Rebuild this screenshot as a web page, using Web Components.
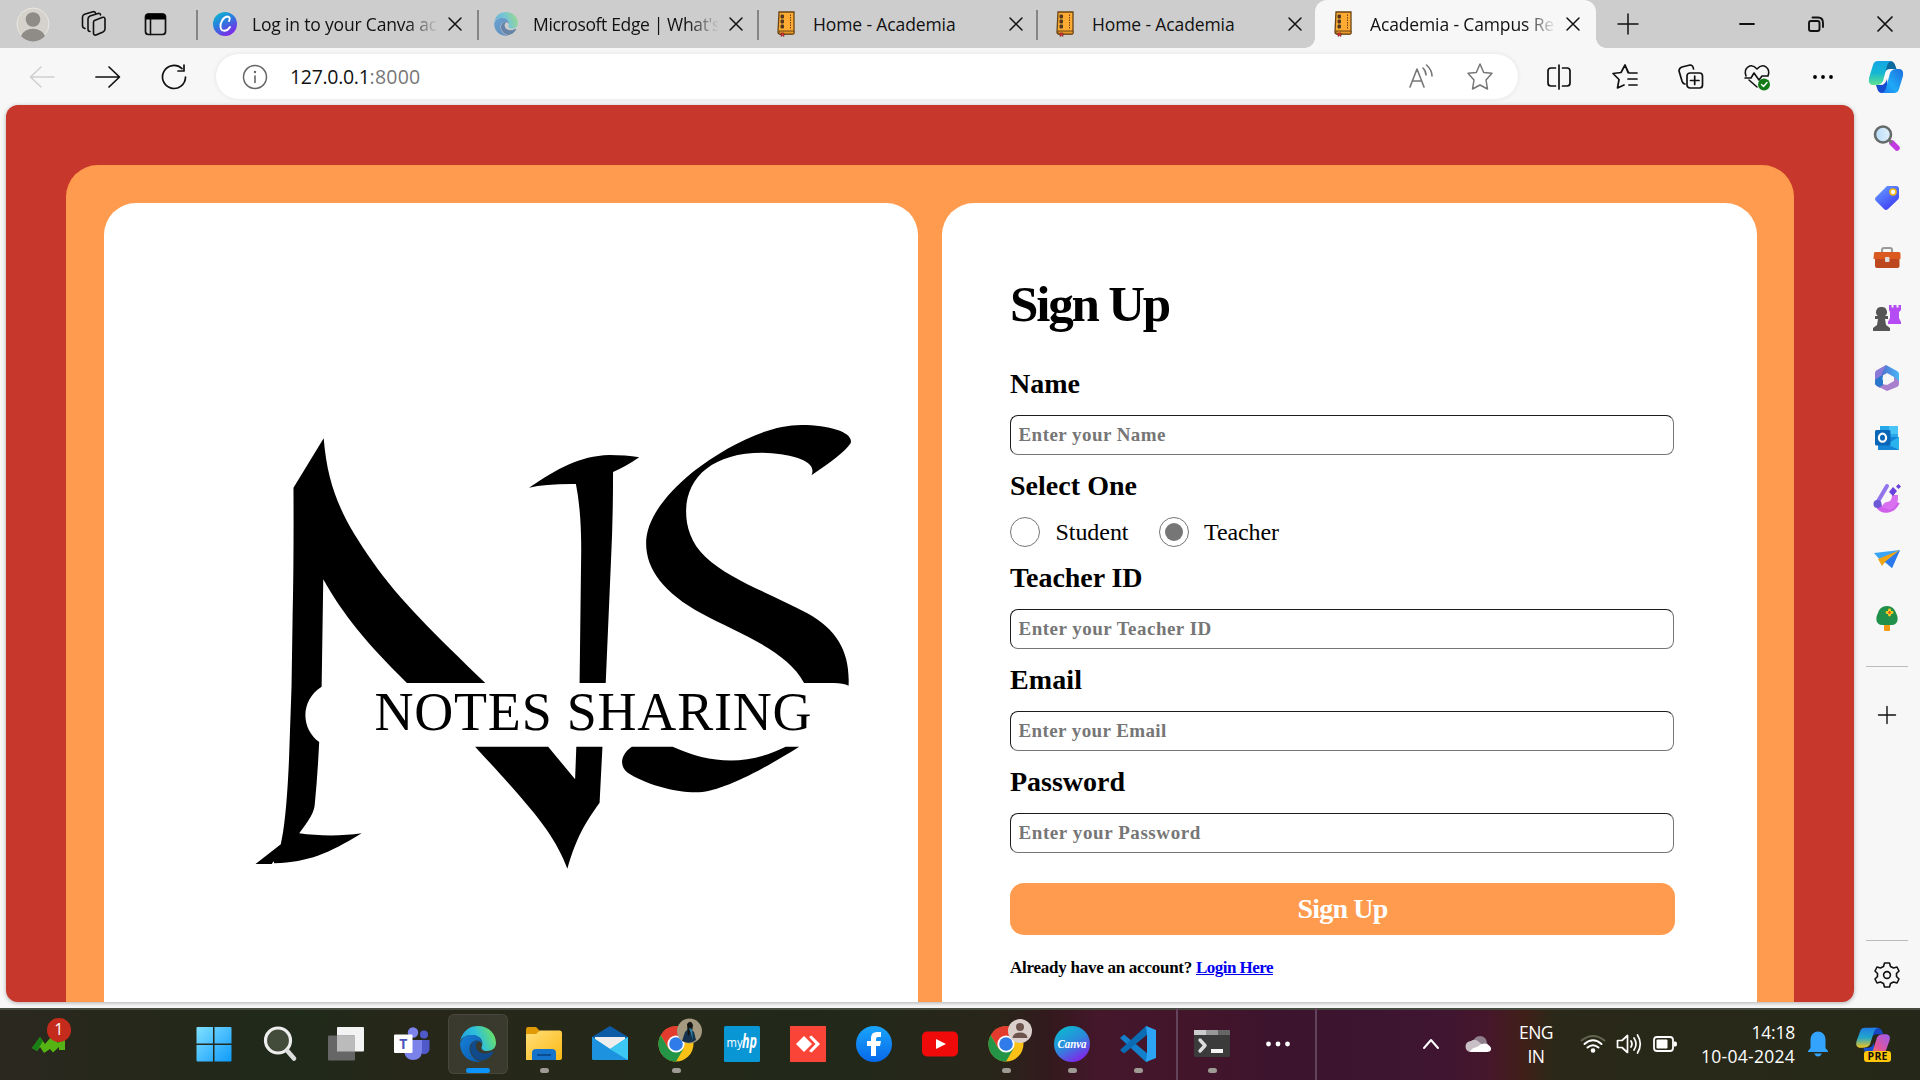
<!DOCTYPE html>
<html lang="en">
<head>
<meta charset="utf-8">
<title>Academia - Campus Resources</title>
<style>
html,body{margin:0;height:100%;overflow:hidden;background:#f7f7f7}
</style>
</head>
<body>
<desktop-screen></desktop-screen>
<script>
const UI = '"Open Sans","Noto Sans",sans-serif';
const SERIF = '"Liberation Serif",serif';

/* Every icon is drawn around the origin, in CSS pixels. */
const book = `<path d="M-7 -12h15v20q0 2-2 2h-12q-2 0-2-2z" fill="#ffab33" stroke="#6b4413" stroke-width="1.3"/><path d="M-7 7h15v3h-15z" fill="#e9992a" stroke="#6b4413"/><path d="M4.500 -9.500v14" stroke="#6b4413" stroke-dasharray="1.500 1"/><path d="M-5 -9h2.500v3h-2.500zM-5 -4h2.500v3h-2.500zM-5 1h2.500v3h-2.500z" fill="#7a1f1f" stroke="#442"/><path d="M-5 9h3v3.500l-1.500-1-1.500 1z" fill="#e33" stroke="#622" stroke-width=".6"/>`;
const edgeArt = `<defs><linearGradient id="ea" x1="0" x2="1" y1=".6" y2=".3"><stop offset="0" stop-color="#1d9be0"/><stop offset=".5" stop-color="#2fc1dc"/><stop offset="1" stop-color="#6fe35a"/></linearGradient><linearGradient id="eb" x1="0" x2="1" y1="0" y2="1"><stop offset="0" stop-color="#1681d8"/><stop offset="1" stop-color="#0b57a8"/></linearGradient></defs><path d="M-18 -3C-15 -14 -8 -18 0 -18C11 -18 18 -10 18 -1C18 4 14 7 9 7C5 7 2.500 5 4 2C6 -4 1 -9 -6 -9C-12 -9 -16 -6 -18 -3z" fill="url(#ea)"/><path d="M-18 -1C-15 -8 -10 -9.500 -5 -9C1 -8.500 5 -4 4 0C3 -2 1 -3.500 -2 -3.500C-8 -2 -10 4 -7 10C-5 14 -1 17.500 4 17.500C-8 20 -18 12 -18 -1z" fill="url(#eb)"/><path d="M-3 -3C-9 0 -9 8 -4 13C1 19 10 17 15 9C16 8 15 7 13 8C6 11 -1 9 -2 3C-2.500 0 -1 -2 1 -3z" fill="#114a8b"/>`;
const chromeArt = `<circle r="17.500" fill="#fbc116"/><path d="M0 0L-15.200 -8.800A17.500 17.500 0 0 1 15.200 -8.800z" fill="#e33b2e"/><path d="M0 -8.800H15.200A17.500 17.500 0 0 0 -15.200 -8.800L-7.600 4.400z" fill="#e33b2e"/><path d="M-15.200 -8.800A17.500 17.500 0 0 0 0 17.500L7.600 4.400L-7.600 4.400z" fill="#249447"/><circle r="8.600" fill="#fff"/><circle r="6.800" fill="#2f7bea"/>`;
const copilotArt = (k) => `<defs><linearGradient id="ca" x1="0" y1="0" x2="0" y2="1"><stop offset="0" stop-color="${k?'#1f7de6':'#15a5e6'}"/><stop offset=".5" stop-color="${k?'#22a6c9':'#14b7d3'}"/><stop offset="1" stop-color="${k?'#f3c51e':'#5fe28e'}"/></linearGradient><linearGradient id="cb" x1="1" y1="0" x2="0" y2="1"><stop offset="0" stop-color="${k?'#9b5cf0':'#1d6fe0'}"/><stop offset=".6" stop-color="${k?'#e0559a':'#1ea9f5'}"/><stop offset="1" stop-color="${k?'#f58a3c':'#1d7df0'}"/></linearGradient></defs><path d="M-2 -16H4Q8 -16 9.500 -11L10.500 -8H4Q0 -8 -2 -3z" fill="${k?'#1646c4':'#0c6a9e'}"/><path d="M-8 -16H5Q2 -15 1 -11L-3 4Q-5 8 -9 8H-14Q-18 7 -17 1L-13 -12Q-12 -16 -8 -16z" fill="url(#ca)"/><path d="M2 16H-4Q-8 16 -9 11L-10 8H-5Q-1 8 1 2z" fill="#154cd0"/><path d="M8 16H-4Q-1 15 0 11L4 -4Q6 -8 10 -8H14Q18 -7 17 -1L13 12Q12 16 8 16z" fill="url(#cb)"/>`;
const S = (d, w = 1.6, c = '#111') => `<path d="${d}" fill="none" stroke="${c}" stroke-width="${w}" stroke-linecap="round" stroke-linejoin="round"/>`;
const star = 'M0 -13L3.700 -4.500L12 -3.800L6 3L7.500 12L0 8L-7.500 12L-6 3L-12 -3.800L-3.700 -4.500z';

const ICONS = {
  avatar: `<circle r="16" fill="#d5d2cb" stroke="#e9e7e2"/><circle cy="-4.500" r="7.300" fill="#8f8b86"/><path d="M-12 12A12.500 10 0 0 1 12 12A16 16 0 0 1 -12 12z" fill="#8f8b86"/>`,
  workspaces: S('M0.500 -3.500L8 -6.500Q11 -7.500 11 -5V5Q11 7 9 8L2 11Q-0.500 11.500 -0.500 9V-1.500Q-0.500 -3 .5 -3.500M-4 7.500Q-6 7.500 -6 5V-5Q-6 -7 -4 -8L4 -10.500Q6.500 -11 6.500 -9M-9 4.500Q-11.500 4 -11.500 1.500V-7Q-11.500 -9 -9.500 -9.800L-1 -12.300Q1 -12.500 1.500 -11'),
  vtabs: `<rect x="-10" y="-10.500" width="20" height="20.500" rx="3" fill="none" stroke="#111" stroke-width="1.700"/><path d="M-10 -8Q-10 -11 -7 -11H7Q10 -11 10 -8V-5H-10z"/>${S('M-5 -5V10')}`,
  canvaTab: `<defs><linearGradient id="a" x1="0" y1="0" x2=".6" y2="1"><stop offset="0" stop-color="#05c3cc"/><stop offset=".5" stop-color="#2a7ddd"/><stop offset="1" stop-color="#7d2ae8"/></linearGradient></defs><circle r="12" fill="url(#a)"/>${S('M4 -3Q6 -7 2.500 -7.500C-2 -7 -5 -1 -4.500 3C-4 8 2 8 5 3',1.9,'#fff')}`,
  edgeTab: `<g transform="scale(.66)" opacity=".55">${edgeArt}</g>`,
  book,
  x: S('M-6 -6L6 6M6 -6L-6 6',1.5),
  wx: S('M-7 -7L7 7M7 -7L-7 7',1.7),
  plus: S('M-10 0H10M0 -10V10',1.5),
  min: S('M-7 0H7',1.8),
  restore: `<rect x="-7" y="-3" width="10.500" height="10" rx="2" fill="none" stroke="#111" stroke-width="1.900"/>${S('M-3.500 -6.500H2Q7 -6.500 7 -1V3',1.9)}`,
  back: S('M12 0H-11M-1 -10L-11.500 0L-1 10',1.5,'#cfcfcf'),
  fwd: S('M-12 0H11M1 -10L11.500 0L1 10',1.7),
  reload: S('M11.500 0A11.500 11.500 0 1 1 8 -8.300M10 -12V-6H4',1.7),
  info: `<circle r="11.500" fill="none" stroke="#666" stroke-width="1.500"/>${S('M0 -1V5.500',1.6,'#666')}<circle cy="-5" r="1.200" fill="#666"/>`,
  read: S('M-11 10L-4 -8L3 10M-8.500 4H.5M2 -9Q5 -6 5 -2M5.500 -12Q11 -7 11 -1',1.6,'#777'),
  star: S(star,1.5,'#777'),
  split: S('M0 -12V12M-3.500 -9H-8Q-11 -9 -11 -6V6Q-11 9 -8 9H-3.500M3.500 -9H8Q11 -9 11 -6V6Q11 9 8 9H3.500',1.7),
  favs: S('M3 -4.500L0 -12L-4 -4.500L-12 -3.500L-6 2.500L-7.500 11L-1 8M4 -4H12M3 2H12M4 8H12M0 -12L3.500 -4.500',1.7),
  collect: `<rect x="-4" y="-4" width="15.500" height="15" rx="3" fill="none" stroke="#111" stroke-width="1.700"/>${S('M3.700 -.8V7.500M-.5 3.500H8M-6 7Q-8 7 -9 4L-12 -6Q-12 -9 -9 -10L-1 -12Q2 -12 2.500 -8',1.7)}`,
  heart: S('M-11 -1C-14 -9 -6 -15 0 -8C6 -15 14 -9 11 -1M-8 3L0 10M-12 1H-6L-3 -4L2 3L5 -1H11',1.6)+`<circle cx="7" cy="7.500" r="6" fill="#147a17"/>${S('M4.500 7.500L6.500 9.500L10 5.500',1.4,'#fff')}`,
  dots: `<circle cx="-8" r="1.900"/><circle r="1.900"/><circle cx="8" r="1.900"/>`,
  copilot: copilotArt(0),
  // sidebar
  sSearch: `<defs><linearGradient id="a"><stop offset="0" stop-color="#b8dcf8"/><stop offset="1" stop-color="#e3f2fc"/></linearGradient></defs><path d="M5 5L10 10" stroke="#c23ae0" stroke-width="5.500" stroke-linecap="round"/><path d="M2 2L5 5" stroke="#777" stroke-width="3"/><circle cx="-4" cy="-3.500" r="8" fill="url(#a)" stroke="#666b6b" stroke-width="2.600"/>`,
  sTag: `<defs><linearGradient id="a" x1="0" y1="0" x2=".7" y2="1"><stop offset="0" stop-color="#68a5ff"/><stop offset="1" stop-color="#3d3cf5"/></linearGradient></defs><path d="M0 -12H9Q12 -12 12 -9V-1Q12 0 11 1.500L1 11Q-1 13 -3 11L-11 3Q-13 1 -11 -1z" fill="url(#a)"/><circle cx="6" cy="-6" r="3" fill="#fff" stroke="#f5b90f" stroke-width="1.700"/>`,
  sTool: `<path d="M-5 -5V-8Q-5 -10 -3 -10H3Q5 -10 5 -8V-5" fill="none" stroke="#999" stroke-width="2"/><rect x="-12" y="-5" width="24.500" height="15" rx="2" fill="#bd471f"/><path d="M-13 -5Q-13 -6 -11 -6H12Q13.500 -6 13.500 -4V1H-13.500z" fill="#da5a20"/><rect x="-2" y="-1" width="4.500" height="5" rx="1" fill="#ddd"/>`,
  sChess: `<path d="M2 -13h2.500v2.500h2v-2.500h3v2.500h2v-2.500h2.500v5l-2 2v6l2 4v2h-13v-2l2-4v-6l-1-2z" fill="#b54cf3"/><path d="M-5 -11a5 5 0 0 1 3 9h3v3h-3l1 6 4 3v3h-17v-3l4-3 1-6h-3v-3h3a5 5 0 0 1 3-9z" fill="#555"/>`,
  sM365: `<defs><linearGradient id="a"><stop offset="0" stop-color="#5264c8"/><stop offset="1" stop-color="#48b6f5"/></linearGradient></defs><path d="M-1 -13L-10 -8Q-12 -7 -12 -5V5Q-12 7 -10 8L-7 10L-4 7V-3L0 -6z" fill="#8b7ad8"/><path d="M-1 -13L10 -7Q12 -6 12 -4V5L7 3V-1L0 -5L-5 -2V5L-9 8Q-5 4 -5 -5z" fill="url(#a)"/><path d="M12 3V6Q12 8 10 9L0 13L-10 8L-5 6L0 7L7 3V-1z" fill="#a880ce"/><path d="M-7 9L-4 7V-3L-8 -1L-12 2V5Q-12 7 -10 8z" fill="#2878cb"/><circle cy=".5" r="4.500" fill="#f7f7f7"/>`,
  sOut: `<path d="M-7 -12H9Q11 -12 11 -10V3H-7z" fill="#28a8ea"/><path d="M2 -12H11V-4H2z" fill="#45c4f5"/><path d="M-9 -1H12V12H-9z" fill="#1384d7"/><path d="M12 -1L0 6L12 12z" fill="#2ab2ed"/><rect x="-12" y="-8" width="15.500" height="15.500" rx="1.500" fill="#0a67b8"/><ellipse cx="-4.500" cy="-.3" rx="3.600" ry="4" fill="none" stroke="#fff" stroke-width="2.200"/>`,
  sPaint: `<path d="M-9 6C-6 14 5 14 10 4" fill="none" stroke="#d060ec" stroke-width="6"/><path d="M-5 9Q-3 4 0 4Q5 4 5 -3H11Q12 8 3 12z" fill="#d970f0"/><path d="M-10 5L0 -12" stroke="#9274ec" stroke-width="4" stroke-linecap="round"/><circle cx="-9.500" cy="6" r="4" fill="#6b59d8"/><path d="M6 -11L10 -7L6 -2L2 -6zM11.500 -14L14 -11.500L11.500 -9L9 -11.500z" fill="#6a41dd"/>`,
  sPlane: `<path d="M-13 -5L13 -8L5 10L-2 4L-5 7L-7 2z" fill="#39a5f4"/><path d="M-9 1L13 -8L-2 4L-5 8z" fill="#f1a513"/><path d="M13 -8L5 10L-2 4z" fill="#2d78eb"/>`,
  sTree: `<rect x="-3" y="5" width="6" height="8" rx="1" fill="#f19b13"/><path d="M0 -12C6 -12 8 -8 9 -5C12 0 11 7 5 7H-5C-11 7 -12 0 -9 -5C-8 -9 -5 -12 0 -12z" fill="#20904a"/><path d="M2.500 -8v5M0 -5.500h5" stroke="#ffcc24" stroke-width="2.800" stroke-linecap="round"/><circle cx="2.500" cy="-5.500" r="1.200" fill="#d4451d"/>`,
  sPlus: S('M-8.500 0H8.500M0 -8.500V8.500',1.4),
  gear: S('M-2.500 -12H2.500L3.500 -8.500L6.500 -7L10 -8L12 -4L9.500 -1.500V1.500L12 4L10 8L6.500 7L3.500 8.500L2.500 12H-2.500L-3.500 8.500L-6.500 7L-10 8L-12 4L-9.500 1.500V-1.500L-12 -4L-10 -8L-6.500 -7L-3.500 -8.500z',1.6)+`<circle r="3.400" fill="none" stroke="#111" stroke-width="1.600"/>`,
  // taskbar
  trend: `<path d="M-17 4L-9 -7L-4 0L3 -8L9 -1L16 -11V6H10V3L4 8.500L1 5L-5 9L-9 3L-12 7z" fill="#55b413"/><path d="M-17 4L-9 -7L-6 -3L-12 7z" fill="#188016"/>`,
  win: `<defs><linearGradient id="a" gradientUnits="userSpaceOnUse" x1="-17" y1="-17" x2="17" y2="17"><stop offset="0" stop-color="#7fe0ff"/><stop offset="1" stop-color="#109bfb"/></linearGradient></defs><path d="M-17.500 -16q0-1 1-1h15.500v16.500h-16.500zM.5 -17h16q1 0 1 1v15.500h-17zM-17.500 1h16.500v16.500h-15.500q-1 0-1-1zM.5 1h17v15.500q0 1-1 1h-16z" fill="url(#a)"/>`,
  tSearch: `<circle cx="-2" cy="-3.500" r="12.500" fill="#434b3a" stroke="#eee" stroke-width="3.200"/><path d="M7.500 7L14 14.500" stroke="#ddd" stroke-width="4.600" stroke-linecap="round"/>`,
  tview: `<rect x="-9" y="-17" width="27" height="24.500" rx="1" fill="#f3f3f3"/><rect x="-18" y="-8.500" width="27" height="25" rx="1" fill="#666"/><path d="M-9 -8.500H9V7.500H-9z" fill="#bbb"/>`,
  teams: `<circle cx="1" cy="-11.500" r="5.200" fill="#7b83eb"/><circle cx="12" cy="-9.500" r="4" fill="#5059c9"/><path d="M6 -4H17.500V5Q17 11 10 10z" fill="#5059c9"/><path d="M-8 -4H10V8Q9 16 1 16Q-6 16 -8 8z" fill="#7b83eb"/><rect x="-18" y="-9.500" width="18.500" height="18.500" rx="1" fill="#fff"/><text x="-8.800" y="5" text-anchor="middle" font-family="Open Sans" font-weight="700" font-size="14" fill="#4b53bc">T</text>`,
  edge: edgeArt,
  folder: `<defs><linearGradient id="a" x1="0" y1="0" x2="1" y2="1"><stop offset="0" stop-color="#ffe07a"/><stop offset="1" stop-color="#fcb813"/></linearGradient></defs><path d="M-18 -14Q-18 -17 -16 -17H-8L-4 -13V-8H-18z" fill="#df9a05"/><path d="M-18 -10H-8L-4 -13.500H16Q18 -13.500 18 -11V14Q18 16 16 16H-18z" fill="url(#a)"/><path d="M-12 16V9Q-12 5 -8 5H8Q12 5 12 9V16z" fill="#1474cb"/><path d="M-7 11H7" stroke="#0a4d91" stroke-width="2"/>`,
  mail: `<path d="M-18 -7L0 -18L18 -7V4H-18z" fill="#0d5aa6"/><path d="M-15 -7H15V6H-15z" fill="#eee"/><path d="M-18 -7L0 5L18 -7V14Q18 16 16 16H-16Q-18 16 -18 14z" fill="#37c0f0"/><path d="M-18 -7L0 5L18 16H-16Q-18 16 -18 14z" fill="#1d92de"/><path d="M0 5L18 -7V16z" fill="#3cc8f2"/>`,
  chromeA: `${chromeArt}<circle cx="13.500" cy="-13" r="12.500" fill="#a59a80"/><path d="M6 -3L9 -12L13 -16L18 -12L20 -4Q14 1 6 -3z" fill="#17324c"/><path d="M11 -20Q15 -25 17 -19L16 -12L12 -8z" fill="#171715"/><path d="M13 -16L16 -15L17 -4z" fill="#2783aa"/>`,
  myhp: `<rect x="-18" y="-18" width="36" height="36" rx="1.500" fill="#0896d4"/><text x="-15.500" y="3" font-family="Open Sans" font-size="13.500" fill="#fff" textLength="16" lengthAdjust="spacingAndGlyphs">my</text><text x="0" y="4" font-family="Open Sans" font-size="20" font-style="italic" font-weight="700" fill="#fff" textLength="15" lengthAdjust="spacingAndGlyphs">hp</text>`,
  anydesk: `<path d="M-18 -18H18V18H-18z" fill="#fb4438"/><path d="M-4 -8L4 0L-4 8L-12 0zM1 -7L3.500 -8.500L12 0L3.500 8.500L1 7L7.500 0z" fill="#fff"/>`,
  fb: `<defs><linearGradient id="a" x1="0" x2="0" y1="0" y2="1"><stop offset="0" stop-color="#19a5fc"/><stop offset="1" stop-color="#0868ea"/></linearGradient></defs><circle r="18" fill="url(#a)"/><path d="M-3 12V2H-7V-3H-3V-6Q-3 -12 3 -12H7V-7H4Q2 -7 2 -5V-3H7L6 2H2V12z" fill="#fff"/>`,
  yt: `<rect x="-18" y="-12.500" width="36" height="25" rx="5" fill="#f00a0a"/><path d="M-4 -5L6 0L-4 5z" fill="#fff"/>`,
  chromeB: `${chromeArt}<circle cx="14" cy="-13" r="12" fill="#dbd0cc"/><circle cx="14" cy="-17" r="4" fill="#6d554e"/><path d="M6.500 -6Q7 -11.500 14 -11.500Q21 -11.500 21.500 -6z" fill="#6d554e"/>`,
  canva: `<defs><linearGradient id="a" x1="0" y1="0" x2=".6" y2="1"><stop offset="0" stop-color="#05c3cc"/><stop offset=".55" stop-color="#2a8bdd"/><stop offset="1" stop-color="#7d2ae8"/></linearGradient></defs><circle r="18" fill="url(#a)"/><text x="-14.500" y="4" font-family="Liberation Serif" font-style="italic" font-weight="700" font-size="13.500" fill="#fff" textLength="29" lengthAdjust="spacingAndGlyphs">Canva</text>`,
  vscode: `<path d="M-18 -6L-14 -9.500L10 10V17L8 18z" fill="#1480cc"/><path d="M-18 6L-14 9.500L10 -10V-17L8 -18z" fill="#0b6cb4"/><path d="M8 -18L18 -14V14L8 18L9 10V-10z" fill="#2da3f3"/>`,
  term: `<rect x="-18" y="-14" width="36" height="27" rx="1.500" fill="#3b3b3b"/><path d="M-18 -14H-6V-9H-18z" fill="#ccc"/><path d="M-6 -14H6V-9H-6z" fill="#999"/><path d="M6 -14H18V-9H6z" fill="#666"/>${S('M-12 -4L-7 1.500L-12 7',3.4,'#ddd')}<path d="M-1 5H11V9H-1z" fill="#f4f4f4"/>`,
  tdots: `<g fill="#fff"><circle cx="-9.500" r="2.400"/><circle r="2.400"/><circle cx="9.500" r="2.400"/></g>`,
  chev: S('M-7 4L0 -4L7 4',2,'#fff'),
  cloud: `<path d="M-6 -1A7 7 0 0 1 8 -1L11 4H-6z" fill="#8f7f8c"/><path d="M-8 8A5.500 5.500 0 0 1 -8 -3Q-4 -6 0 -2L5 2L-4 8z" fill="#c9bfc7"/><path d="M-9 8Q-8 4 -2 3Q3 -2 8 0Q13 3 12 6Q11 8 8 8z" fill="#fff"/>`,
  wifi: S('M-11.500 -3.500Q0 -12.500 11.500 -3.500',2,'#62654f')+S('M-8.500 0Q0 -7.500 8.500 0M-5.500 3.500Q0 -1 5.500 3.500',2,'#fff')+`<circle cy="6.500" r="2.300" fill="#fff"/>`,
  vol: S('M-11.500 -3.500H-7L-1.500 -8.500V8.500L-7 3.500H-11.500zM2 -3Q4 0 2 3M5 -6Q9 0 5 6M8.500 -9Q14 0 8.500 9',1.7,'#fff'),
  bat: `<rect x="-11" y="-7" width="19" height="14" rx="3" fill="none" stroke="#fff" stroke-width="1.800"/><rect x="-8.500" y="-4.500" width="11" height="9" rx="1" fill="#fff"/><path d="M9 -2.500H10.500Q12 -2.500 12 0Q12 2.500 10.500 2.500H9z" fill="#fff"/>`,
  bell: `<path d="M-7.500 5V-4A7.500 7.500 0 0 1 7.500 -4V5L10 8V9H-10V8zM-4 10.500H4Q2.500 13.500 0 13.500Q-2.500 13.500 -4 10.500z" fill="#33a3fb" transform="translate(0 -1)"/>`,
  copilotPre: `<g transform="translate(0 -3) scale(.98 .83)">${copilotArt(1)}</g><rect x="-9" y="7" width="27" height="11" rx="3" fill="#ffc60a"/><text x="-5.500" y="16.200" font-family="Open Sans" font-weight="700" font-size="10.500" fill="#15110a" textLength="20">PRE</text>`
};

function element(name, html, setup) {
  const t = document.createElement('template');
  t.innerHTML = html;
  customElements.define(name, class extends HTMLElement {
    constructor() {
      super();
      this.attachShadow({ mode: 'open' }).append(t.content.cloneNode(true));
    }
    connectedCallback() { if (setup) setup.call(this, this.shadowRoot); }
  });
}

element('browser-tab', `<style>
:host{display:flex;align-items:center;box-sizing:border-box;height:48px;padding-left:11px;border-left:0;flex:none;position:relative;font:17.5px/24px ${UI};color:#111}
:host::before{content:"";position:absolute;left:-1px;top:10px;width:2px;height:30px;background:#858585}
:host([active]){background:#f7f7f7;border-radius:12px 12px 0 0}
:host([active])::before{display:none}
.corner{display:none;position:absolute;bottom:0;width:10px;height:10px}
:host([active]) .corner{display:block}
.l{left:-10px;background:radial-gradient(circle at 0 0,transparent 9.5px,#f7f7f7 10px)}
.r{right:-10px;background:radial-gradient(circle at 100% 0,transparent 9.5px,#f7f7f7 10px)}
.title{width:185px;margin-left:10px;overflow:hidden;white-space:nowrap;height:24px}
:host([fade]) .title{-webkit-mask-image:linear-gradient(90deg,#000 155px,transparent 186px)}
.close{margin-left:6px}
</style><span class="corner l"></span><app-icon w="34" class="fav"></app-icon><div class="title"><slot></slot></div><app-icon class="close" name="x" w="24"></app-icon><span class="corner r"></span>`, function (r) {
  r.querySelector('.fav').setAttribute('name', this.getAttribute('icon'));
});

element('tab-strip', `<style>
:host{display:flex;height:48px;background:#cdcdcd;align-items:center}
.lead{display:flex;width:197px;align-items:center;box-sizing:border-box;padding-left:15px;gap:28.500px}
.end{display:flex;align-items:center;padding-left:14px}
.win{display:flex;gap:33px;padding-left:83px}
</style>
<div class="lead"><app-icon name="avatar"></app-icon><app-icon name="workspaces" w="28"></app-icon><app-icon name="vtabs" w="39"></app-icon></div>
<browser-tab icon="canvaTab" fade style="width:281px"><fit-text w="185">Log in to your Canva ac</fit-text></browser-tab>
<browser-tab icon="edgeTab" fade style="width:280px"><fit-text w="187">Microsoft Edge | What's</fit-text></browser-tab>
<browser-tab icon="book" style="width:279px"><fit-text w="142.500">Home - Academia</fit-text></browser-tab>
<browser-tab icon="book" style="width:278px"><fit-text w="142.500">Home - Academia</fit-text></browser-tab>
<browser-tab icon="book" active fade style="width:281px"><fit-text w="184">Academia - Campus Re</fit-text></browser-tab>
<div class="end"><app-icon name="plus"></app-icon><div class="win"><app-icon name="min"></app-icon><app-icon name="restore"></app-icon><app-icon name="wx"></app-icon></div></div>`);

element('address-bar', `<style>
:host{display:flex;align-items:center;box-sizing:border-box;width:1302px;height:45px;border-radius:23px;background:#fff;box-shadow:0 0 5px rgba(0,0,0,.09);padding:0 20px 0 21px;font:19.5px/28px ${UI};color:#111;flex:none}
.url{display:flex;margin-left:17px;flex:1}
.port{color:#777}
.acts{display:flex;gap:23px}
</style><app-icon name="info"></app-icon><div class="url"><fit-text w="79.500">127.0.0.1</fit-text><fit-text class="port" w="51">:8000</fit-text></div><div class="acts"><app-icon name="read"></app-icon><app-icon name="star"></app-icon></div>`);

element('tool-bar', `<style>
:host{display:flex;align-items:center;height:57px;background:#f7f7f7}
.nav{display:flex;gap:30px;width:216px;box-sizing:border-box;padding-left:24px}
.tools{display:flex;gap:30px;padding-left:23px}
.tools app-icon:last-child{margin-left:-3px}
</style><div class="nav"><app-icon name="back"></app-icon><app-icon name="fwd"></app-icon><app-icon name="reload"></app-icon></div><address-bar></address-bar>
<div class="tools"><app-icon name="split"></app-icon><app-icon name="favs"></app-icon><app-icon name="collect"></app-icon><app-icon name="heart"></app-icon><app-icon name="dots"></app-icon><app-icon name="copilot"></app-icon></div>`);

element('side-bar', `<style>
:host{display:flex;flex-direction:column;align-items:center;width:66px;box-sizing:border-box;padding-top:2.500px}
hr{width:42px;height:1px;border:0;background:#bbb;margin:0;flex:none}
.add{margin-top:18px}.foot{margin-top:auto;margin-bottom:3px;display:flex;flex-direction:column;align-items:center;gap:4px}
</style>
<app-icon name="sSearch" w="60"></app-icon><app-icon name="sTag" w="60"></app-icon><app-icon name="sTool" w="60"></app-icon><app-icon name="sChess" w="60"></app-icon><app-icon name="sM365" w="60"></app-icon><app-icon name="sOut" w="60"></app-icon><app-icon name="sPaint" w="60"></app-icon><app-icon name="sPlane" w="60"></app-icon><app-icon name="sTree" w="60"></app-icon>
<hr style="margin-top:18px"><app-icon class="add" name="sPlus" w="60"></app-icon>
<div class="foot"><hr><app-icon name="gear" w="60"></app-icon></div>`);

element('notes-logo', `<style>:host{display:block}svg{display:block}</style>
<svg width="640" height="490" viewBox="0 0 640 490"><g transform="scale(.40816 .33333)">
<path d="M205 115L131 263Q132 480 129 640Q128 860 120 1080C115 1220 108 1290 100 1333L38 1392L78 1392L82 1384L84 1390C170 1386 215 1362 298 1300C250 1309 190 1308 145 1300C170 1260 182 1235 183 1215Q190 1130 194 1026C148 985 148 900 200 860L204 538C250 640 310 730 409 849L601 849C480 705 390 600 325 485C250 355 215 265 205 115z"/>
<path d="M708 263C780 205 830 168 905 165Q945 165 978 172Q945 200 914 216Q914 360 909 480L896 849L832 849L836 450Q836 330 823 252Q750 251 708 263z"/>
<path d="M1400 226C1450 185 1480 158 1496 130C1505 100 1450 75 1375 75C1290 75 1190 140 1110 215C1040 285 995 360 995 430C995 510 1040 580 1130 640C1220 700 1340 750 1382 849L1455 849Q1478 850 1491 857C1495 760 1465 690 1390 640C1300 580 1200 540 1140 470C1105 430 1093 380 1093 335C1093 230 1160 158 1280 158C1350 160 1417 182 1400 226z"/>
<path d="M576 1040L755 1040L821 1138L824 1040L888 1040L881 1208C845 1270 825 1310 802 1406C770 1300 715 1225 576 1040z"/>
<path d="M960 1040L1060 1040C1150 1090 1240 1100 1337 1040L1370 1040C1260 1125 1170 1177 1118 1177C1060 1177 990 1150 950 1118C930 1100 930 1065 960 1040z"/></g>
<text x="134.500" y="329.500" font-family="Liberation Serif" font-size="54" textLength="437">NOTES SHARING</text></svg>`);

element('form-field', `<style>
:host{display:block;height:102px}
label{display:block;font:bold 28px/32px ${SERIF};margin-bottom:15.500px}
input{display:block;box-sizing:border-box;width:664px;height:40px;border:1px solid;border-color:#1c1c1c #767676 #767676 #1c1c1c;border-radius:8px;padding:0 0 0 7.500px;background:#fff;font:bold 19px/36px ${SERIF};outline:0}
input::placeholder{color:#767676;opacity:1}
</style><label><fit-text></fit-text></label><input>`, function (r) {
  const f = r.querySelector('fit-text');
  f.textContent = this.getAttribute('label');
  f.setAttribute('w', this.getAttribute('w'));
  r.querySelector('input').placeholder = 'Enter your ' + this.getAttribute('label');
  r.querySelector('input').style.letterSpacing = this.getAttribute('track') || '';
});

element('radio-option', `<style>
:host{display:flex;align-items:center;font:24px/30px ${SERIF};gap:15.500px}
i{display:flex;align-items:center;justify-content:center;box-sizing:border-box;width:30px;height:30px;border:1.5px solid #767676;border-radius:50%}
:host([checked]) i::after{content:"";width:18px;height:18px;border-radius:50%;background:#767676}
</style><i></i><slot></slot>`);

element('signup-form', `<style>
:host{display:block;font-family:${SERIF};color:#000}
h1{margin:1px 0 33.500px;font:bold 51px/60px ${SERIF}}
.pick{height:92px}
.pick b{display:block;font:bold 28px/32px ${SERIF};margin-bottom:15.500px}
.opts{display:flex;gap:30px}
button{display:flex;align-items:center;justify-content:center;width:665px;height:52px;border:0;border-radius:14px;background:#ff9b4e;color:#fff;font:bold 28px/50px ${SERIF};margin:15.500px 0 23px;padding:0}
p{margin:0;font:bold 17px/20px ${SERIF};display:flex;gap:4px}
a{color:#00e;text-decoration:underline}
</style>
<h1><fit-text w="159">Sign Up</fit-text></h1>
<form-field label="Name" w="70" track=".45px"></form-field>
<div class="pick"><b><fit-text w="127">Select One</fit-text></b><div class="opts"><radio-option><fit-text w="73">Student</fit-text></radio-option><radio-option checked><fit-text w="75">Teacher</fit-text></radio-option></div></div>
<form-field label="Teacher ID" w="132.500" track=".48px"></form-field>
<form-field label="Email" w="72" track=".4px"></form-field>
<form-field label="Password" w="115" track=".58px"></form-field>
<button><fit-text w="90">Sign Up</fit-text></button>
<p><fit-text w="182">Already have an account?</fit-text><a href="#"><fit-text w="77">Login Here</fit-text></a></p>`);

element('academia-page', `<style>
:host{display:block;width:1848px;height:897px;box-sizing:border-box;padding:60px 60px 0;background:#c8372b;border-radius:12px;overflow:hidden;box-shadow:0 1px 4px rgba(0,0,0,.3)}
.wrap{display:flex;gap:24px;height:1000px;box-sizing:border-box;padding:38px 37px 38px 38px;background:#ff9b4e;border-radius:32px}
section{flex:1;background:#fff;border-radius:32px;box-sizing:border-box}
.logo{padding:197px 0 0 136px;flex:0 0 814px}.form{padding:70px 68px 0}
notes-logo{width:640px}
</style><div class="wrap"><section class="logo"><notes-logo></notes-logo></section><section class="form"><signup-form></signup-form></section></div>`);

element('task-item', `<style>
:host{display:flex;width:66px;height:72px;align-items:center;justify-content:center;position:relative;flex:none}
:host([active])::before{content:"";position:absolute;left:3px;top:6px;width:60px;height:60px;box-sizing:border-box;border-radius:6px;background:rgba(255,255,255,.09);border:1px solid rgba(255,255,255,.07)}
:host([run])::after,:host([active])::after{content:"";position:absolute;left:28.500px;top:60px;width:9px;height:5px;border-radius:3px;background:#9e9a94}
:host([active])::after{left:21px;width:24px;background:#0a93fb}
app-icon{position:relative}
</style><app-icon w="66" h="70"></app-icon>`, function (r) {
  r.querySelector('app-icon').setAttribute('name', this.getAttribute('icon'));
});

element('task-bar', `<style>
:host{display:flex;align-items:center;height:72px;box-shadow:inset 0 2px #484b40;background:linear-gradient(90deg,#2b2820 0,#25281a 150px,#202a1a 300px,#272719 410px,#252819 600px,#22291a 850px,#29251a 1000px,#33191d 1050px,#45172b 1100px,#42152b 1200px,#3c142e 1290px,#3f1532 1440px,#46172a 1490px,#402018 1525px,#2a2919 1555px,#252818 100%);color:#fff;font:17.5px/24px ${UI}}
.widget{width:181px;position:relative;display:flex;box-sizing:border-box;padding-left:29px}
.badge{position:absolute;left:47px;top:-6px;width:23.500px;height:23.500px;border-radius:50%;background:#c42b1c;font-size:16px;line-height:23px;text-align:center}
.apps,.more{display:flex;align-items:center}
.more{width:141px;height:72px;box-sizing:border-box;border:solid #63445a;border-width:0 2px;margin-left:5px;padding-left:1px}
.tray{display:flex;align-items:center;flex:1}
.lang,.clock{display:flex;flex-direction:column;align-items:center}
.lang{width:34px;margin-left:22px}
.clock{align-items:flex-end;width:95px;margin-left:17px;line-height:24px}
.net{display:flex;margin-left:22px}
</style>
<div class="widget"><app-icon name="trend" w="40"></app-icon><span class="badge">1</span></div>
<div class="apps"><task-item icon="win"></task-item><task-item icon="tSearch"></task-item><task-item icon="tview"></task-item><task-item icon="teams"></task-item><task-item icon="edge" active></task-item><task-item icon="folder" run></task-item><task-item icon="mail"></task-item><task-item icon="chromeA" run></task-item><task-item icon="myhp"></task-item><task-item icon="anydesk"></task-item><task-item icon="fb"></task-item><task-item icon="yt"></task-item><task-item icon="chromeB" run></task-item><task-item icon="canva" run></task-item><task-item icon="vscode" run></task-item></div>
<div class="more"><task-item icon="term" run></task-item><task-item icon="tdots"></task-item></div>
<div class="tray"><app-icon name="chev" w="36" style="margin-left:96px"></app-icon><app-icon name="cloud" w="36" style="margin-left:12px"></app-icon>
<div class="lang"><fit-text w="34">ENG</fit-text><fit-text w="17">IN</fit-text></div>
<div class="net"><app-icon name="wifi" w="36"></app-icon><app-icon name="vol" w="36"></app-icon><app-icon name="bat" w="36"></app-icon></div>
<div class="clock"><fit-text w="43.500">14:18</fit-text><fit-text w="94">10-04-2024</fit-text></div>
<app-icon name="bell" w="36" style="margin-left:5px"></app-icon><app-icon name="copilotPre" w="40" style="margin-left:17px"></app-icon></div>`);

element('desktop-screen', `<style>
:host{display:flex;flex-direction:column;width:1920px;height:1080px;background:#f7f7f7;overflow:hidden}
main{display:flex;height:903px;padding-left:6px}
</style><tab-strip></tab-strip><tool-bar></tool-bar><main><academia-page></academia-page><side-bar></side-bar></main><task-bar></task-bar>`);

/* Defined after its users, which choose the icon's name when they connect. */
element('app-icon', '<style>:host{display:block;flex:none}svg{display:block;overflow:visible}</style><div></div>', function (r) {
  const w = +(this.getAttribute('w') || 36), h = +(this.getAttribute('h') || w);
  r.querySelector('div').innerHTML = `<svg width="${w}" height="${h}" viewBox="${-w / 2} ${-h / 2} ${w} ${h}">${ICONS[this.getAttribute('name')]}</svg>`;
});

/* Spreads its text over a given width by adjusting the tracking. */
element('fit-text', '<style>:host{display:inline-block;white-space:pre;text-decoration:inherit}span{display:inline-block;text-decoration:inherit}</style><span><slot></slot></span>', function (r) {
  const w = +this.getAttribute('w'), s = r.querySelector('span'), n = this.textContent.length;
  if (!w) return;
  s.style.letterSpacing = (w - s.getBoundingClientRect().width) / n + 'px';
});
</script>
</body>
</html>
